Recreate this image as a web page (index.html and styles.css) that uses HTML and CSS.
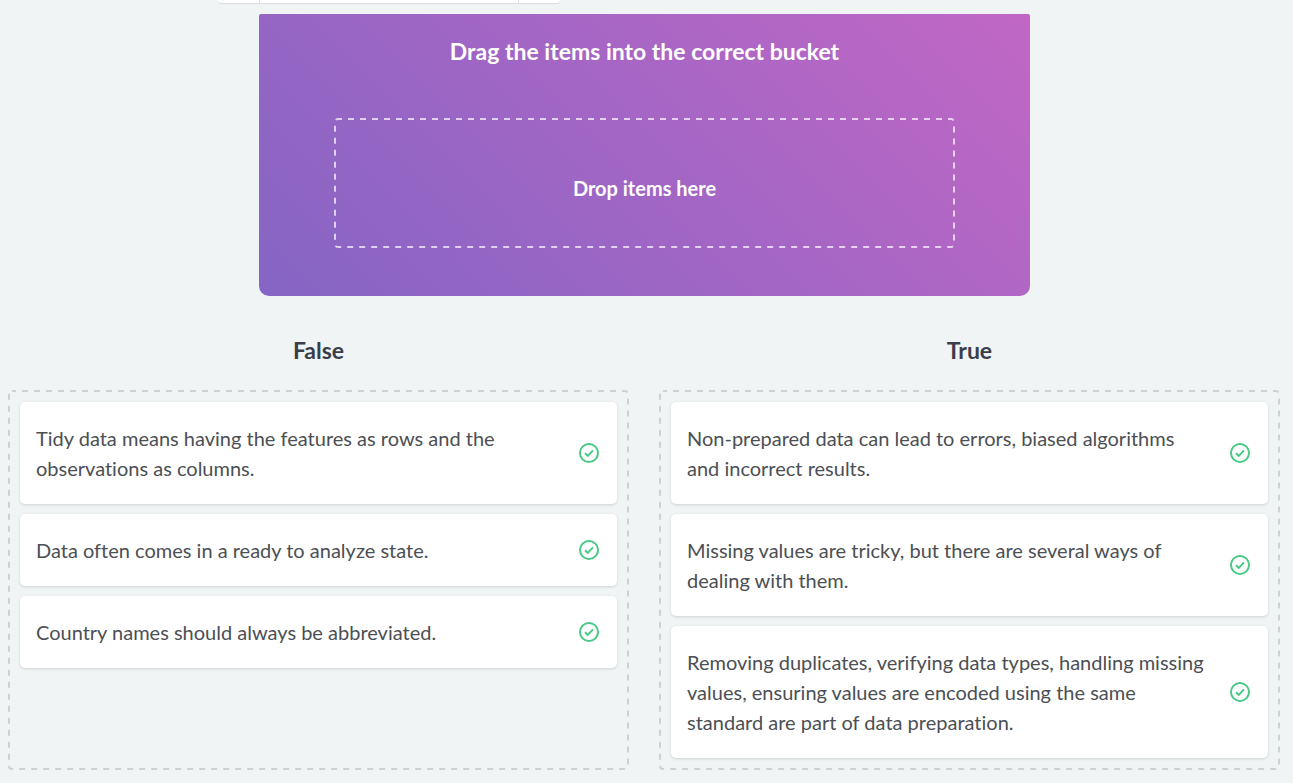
FILE: index.html
```html
<!DOCTYPE html>
<html lang="en">
<head>
<meta charset="utf-8">
<meta name="viewport" content="width=device-width, initial-scale=1">
<title>Drag the items into the correct bucket</title>
<link rel="stylesheet" href="styles.css">
</head>
<body>
<svg class="sprite" aria-hidden="true">
  <symbol id="check" viewBox="0 0 20 20">
    <circle cx="10" cy="10" r="9"/>
    <path d="M6 10.2 8.8 12.9 14 7.4"/>
  </symbol>
</svg>
<div class="toolbar"><span class="toolbar-side"></span><span class="toolbar-main"></span><span class="toolbar-side"></span></div>
<main class="page">
  <section class="banner">
    <h1 class="banner-title">Drag the items into the correct bucket</h1>
    <div class="drop-zone"><svg class="dashes dashes-light" aria-hidden="true"><rect/></svg>Drop items here</div>
  </section>
  <div class="buckets">
    <section class="bucket">
      <h2 class="bucket-title">False</h2>
      <div class="bucket-area">
        <svg class="dashes" aria-hidden="true"><rect/></svg>
        <ul class="bucket-list">
          <li class="item"><span class="item-text">Tidy data means having the features as rows and the observations as columns.</span><svg class="icon"><use href="#check"/></svg></li>
          <li class="item"><span class="item-text">Data often comes in a ready to analyze state.</span><svg class="icon"><use href="#check"/></svg></li>
          <li class="item"><span class="item-text">Country names should always be abbreviated.</span><svg class="icon"><use href="#check"/></svg></li>
        </ul>
      </div>
    </section>
    <section class="bucket">
      <h2 class="bucket-title">True</h2>
      <div class="bucket-area">
        <svg class="dashes" aria-hidden="true"><rect/></svg>
        <ul class="bucket-list">
          <li class="item"><span class="item-text">Non-prepared data can lead to errors, biased algorithms and incorrect results.</span><svg class="icon"><use href="#check"/></svg></li>
          <li class="item"><span class="item-text">Missing values are tricky, but there are several ways of dealing with them.</span><svg class="icon"><use href="#check"/></svg></li>
          <li class="item"><span class="item-text">Removing duplicates, verifying data types, handling missing values, ensuring values are encoded using the same standard are part of data preparation.</span><svg class="icon"><use href="#check"/></svg></li>
        </ul>
      </div>
    </section>
  </div>
</main>
</body>
</html>
```
FILE: styles.css
```css
* {
  box-sizing: border-box;
}

body {
  margin: 0;
  background: #f0f4f5;
  color: #4c4f54;
  font-family: Lato, "Open Sans", sans-serif;
  font-size: 20px;
  font-variant-ligatures: none;
  line-height: 30px;
}

.sprite {
  display: none;
}

.toolbar {
  display: flex;
  width: 342px;
  height: 3px;
  margin-left: 218px;
  background: #fff;
  border-radius: 0 0 4px 4px;
  box-shadow: 0 1px 1px #d9dddf;
}

.toolbar-side {
  width: 41px;
}

.toolbar-main {
  flex: 1;
  border: solid #dfe2e4;
  border-width: 0 1px;
}

.page {
  padding: 11px 12px 13px 8px;
}

.banner {
  max-width: 771px;
  margin: 0 auto;
  padding: 19px 75px 48px;
  border-radius: 2px 2px 10px 10px;
  background: linear-gradient(45deg, #8565c4, #c167c5);
  color: #fff;
  text-align: center;
}

.banner-title {
  margin: 0 0 49px;
  font-size: 23px;
  line-height: 36px;
}

.drop-zone {
  position: relative;
  display: flex;
  align-items: center;
  justify-content: center;
  min-height: 130px;
  padding-top: 10px;
  font-weight: 700;
}

/* Dashed outline with even 6px dashes and 6px gaps */
.dashes {
  position: absolute;
  top: 0;
  left: 0;
  width: 100%;
  height: 100%;
  fill: none;
  stroke: #cdd1d2;
  stroke-width: 2;
  stroke-dasharray: 6 6;
  stroke-dashoffset: 2;
  pointer-events: none;
}

.dashes rect {
  x: 1px;
  y: 1px;
  width: calc(100% - 2px);
  height: calc(100% - 2px);
  rx: 3px;
}

.dashes-light {
  stroke: rgba(255, 255, 255, 0.7);
}

.buckets {
  display: grid;
  grid-template-columns: 1fr 1fr;
  gap: 30px;
  margin: 36px 1px 0 0;
}

.bucket {
  display: flex;
  flex-direction: column;
}

.bucket-title {
  margin: 0 0 22px;
  color: #3a3e4b;
  font-size: 23px;
  line-height: 36px;
  text-align: center;
}

.bucket-area {
  position: relative;
  flex: 1;
  padding: 12px;
}

.bucket-list {
  display: flex;
  flex-direction: column;
  gap: 10px;
  margin: 0;
  padding: 0;
  list-style: none;
}

.item {
  display: flex;
  align-items: center;
  gap: 24px;
  padding: 21px 18px 21px 16px;
  border-radius: 5px;
  background: #fff;
  box-shadow: 0 1px 3px rgba(0, 0, 0, 0.14);
}

.item-text {
  flex: 1;
}

.icon {
  flex: none;
  width: 20px;
  height: 20px;
  fill: none;
  stroke: #48c984;
  stroke-width: 2;
}
```
